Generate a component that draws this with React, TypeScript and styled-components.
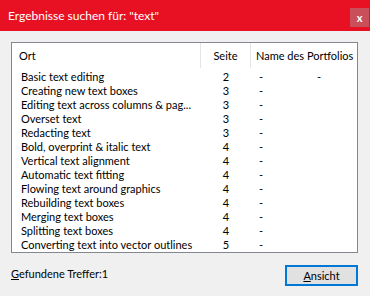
import React from "react";
import styled, { createGlobalStyle } from "styled-components";

const FONT = `Lato, "Noto Sans", sans-serif`;

const Global = createGlobalStyle`
  html, body { margin: 0; padding: 0; background: #f0f0f0; }
  body { font-family: ${FONT}; font-size: 11px; color: #000; }
`;

const Window = styled.div`
  width: 370px;
  height: 296px;
  display: flex;
  flex-direction: column;
  background: #f0f0f0;
  box-sizing: border-box;
  overflow: hidden;
`;

const TitleBar = styled.div`
  height: 31px;
  flex: none;
  background: #e81123;
  display: flex;
  align-items: flex-start;
  justify-content: space-between;
`;

const Title = styled.div`
  color: #fff;
  font-size: 12px;
  line-height: 16px;
  padding: 8px 0 0 8px;
  white-space: nowrap;
`;

const CloseButton = styled.div`
  width: 19px;
  height: 19px;
  margin: 8px 1px 0 0;
  background: #c9505a;
  color: #fff;
  font-weight: bold;
  font-size: 11px;
  display: flex;
  align-items: center;
  justify-content: center;
  line-height: 1;
`;

const Content = styled.div`
  flex: 1;
  display: flex;
  flex-direction: column;
  padding: 11px 12px 0 11px;
`;

const ListBox = styled.div`
  height: 211px;
  box-sizing: border-box;
  border: 1px solid #828790;
  background: #fff;
  display: flex;
  flex-direction: column;
`;

const COLS = "189px 50px 1fr";

const HeaderRow = styled.div`
  height: 27px;
  display: grid;
  grid-template-columns: ${COLS};
  flex: none;
`;

const HeaderCell = styled.div<{ $align?: string; $pad?: number; $sep?: boolean }>`
  height: 25px;
  display: flex;
  align-items: center;
  justify-content: ${(p) => p.$align || "flex-start"};
  padding-left: ${(p) => p.$pad ?? 0}px;
  border-right: ${(p) => (p.$sep ? "1px solid #e5e5e5" : "none")};
  white-space: nowrap;
  overflow: hidden;
`;

const Row = styled.div`
  height: 14px;
  display: grid;
  grid-template-columns: ${COLS};
  line-height: 14px;
`;

const Cell = styled.div<{ $align?: string; $pad?: number }>`
  padding-left: ${(p) => p.$pad ?? 0}px;
  padding-right: ${(p) => (p.$align ? 0 : 6)}px;
  text-align: ${(p) => p.$align || "left"};
  white-space: nowrap;
  overflow: hidden;
  position: relative;
`;

const ExtraDash = styled.span`
  position: absolute;
  left: 66px;
  top: 0;
`;

const Footer = styled.div`
  display: flex;
  justify-content: space-between;
  align-items: center;
  margin-top: 12px;
`;

const Label = styled.div`
  line-height: 16px;
  margin-top: -3px;
`;

const Accel = styled.span`
  text-decoration: underline;
  text-underline-offset: 1px;
`;

const Button = styled.div`
  width: 73px;
  height: 21px;
  box-sizing: border-box;
  border: 2px solid #0078d7;
  background: #e1e1e1;
  display: flex;
  align-items: center;
  justify-content: center;
`;

const rows: [string, string][] = [
  ["Basic text editing", "2"],
  ["Creating new text boxes", "3"],
  ["Editing text across columns & pag...", "3"],
  ["Overset text", "3"],
  ["Redacting text", "3"],
  ["Bold, overprint & italic text", "4"],
  ["Vertical text alignment", "4"],
  ["Automatic text fitting", "4"],
  ["Flowing text around graphics", "4"],
  ["Rebuilding text boxes", "4"],
  ["Merging text boxes", "4"],
  ["Splitting text boxes", "4"],
  ["Converting text into vector outlines", "5"],
];

export default function App() {
  return (
    <>
      <Global />
      <Window>
        <TitleBar>
          <Title>Ergebnisse suchen für: "text"</Title>
          <CloseButton>x</CloseButton>
        </TitleBar>
        <Content>
          <ListBox>
            <HeaderRow>
              <HeaderCell $pad={7} $sep>Ort</HeaderCell>
              <HeaderCell $align="center" $sep>Seite</HeaderCell>
              <HeaderCell $pad={5}>Name des Portfolios</HeaderCell>
            </HeaderRow>
            {rows.map(([name, page], i) => (
              <Row key={i}>
                <Cell $pad={9}>{name}</Cell>
                <Cell $align="center">{page}</Cell>
                <Cell $pad={8}>
                  -{i === 0 && <ExtraDash>-</ExtraDash>}
                </Cell>
              </Row>
            ))}
          </ListBox>
          <Footer>
            <Label>
              <Accel>G</Accel>efundene Treffer:1
            </Label>
            <Button>
              <span>
                <Accel>A</Accel>nsicht
              </span>
            </Button>
          </Footer>
        </Content>
      </Window>
    </>
  );
}
